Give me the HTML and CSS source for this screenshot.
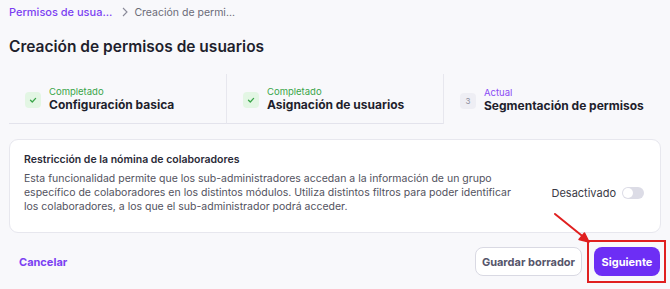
FILE: index.html
```html
<!DOCTYPE html>
<html lang="es">
<head>
    <meta charset="UTF-8">
    <title>Creación de permisos de usuarios</title>
    <link rel="stylesheet" href="styles.css">
</head>
<body>
    <div class="page">
        <!-- breadcrumb -->
        <nav class="breadcrumb">
            <a class="crumb-link">Permisos de usua...</a>
            <svg class="crumb-sep" width="10" height="10" viewBox="0 0 10 10"><path d="M3 1 L7 5 L3 9" fill="none" stroke="#8a8a99" stroke-width="1.1"/></svg>
            <span class="crumb-current">Creación de permi...</span>
        </nav>

        <h1 class="title">Creación de permisos de usuarios</h1>

        <!-- pasos -->
        <div class="stepper">
            <div class="step done">
                <div class="step-icon">
                    <svg width="10" height="10" viewBox="0 0 10 10"><path d="M2.5 5.2 L4.3 7 L7.6 3.4" fill="none" stroke="#3aa54a" stroke-width="1.3" stroke-linecap="round" stroke-linejoin="round"/></svg>
                </div>
                <div class="step-text">
                    <div class="step-status">Completado</div>
                    <div class="step-label">Configuración basica</div>
                </div>
            </div>
            <div class="step done">
                <div class="step-icon">
                    <svg width="10" height="10" viewBox="0 0 10 10"><path d="M2.5 5.2 L4.3 7 L7.6 3.4" fill="none" stroke="#3aa54a" stroke-width="1.3" stroke-linecap="round" stroke-linejoin="round"/></svg>
                </div>
                <div class="step-text">
                    <div class="step-status">Completado</div>
                    <div class="step-label">Asignación de usuarios</div>
                </div>
            </div>
            <div class="step current">
                <div class="step-icon">3</div>
                <div class="step-text">
                    <div class="step-status">Actual</div>
                    <div class="step-label">Segmentación de permisos</div>
                </div>
            </div>
        </div>

        <!-- tarjeta -->
        <div class="card">
            <h2 class="card-title">Restricción de la nómina de colaboradores</h2>
            <div class="card-body">
                <p class="card-desc">Esta funcionalidad permite que los sub-administradores accedan a la información de un grupo específico de colaboradores en los distintos módulos. Utiliza distintos filtros para poder identificar los colaboradores, a los que el sub-administrador podrá acceder.</p>
                <div class="switch-row">
                    <span class="switch-label">Desactivado</span>
                    <span class="switch"><span class="knob"></span></span>
                </div>
            </div>
        </div>

        <!-- acciones -->
        <div class="footer">
            <a class="cancel">Cancelar</a>
            <div class="actions">
                <button class="btn btn-outline">Guardar borrador</button>
                <div class="highlight">
                    <button class="btn btn-primary">Siguiente</button>
                    <svg class="arrow" width="40" height="34" viewBox="0 0 40 34"><path d="M2 2 L33 27" stroke="#e02020" stroke-width="2" stroke-linecap="round"/><path d="M36 30 L26 27.5 L31.5 21 Z" fill="#e02020" stroke="#e02020" stroke-width="1.5" stroke-linejoin="round"/></svg>
                </div>
            </div>
        </div>
    </div>
</body>
</html>
```
FILE: styles.css
```css
body {
    margin: 0;
    background-color: #f8f8fb;
    font-family: "Inter", "Noto Sans", sans-serif;
    color: #22222e;
}

.page {
    padding: 0 9px;
}

.breadcrumb {
    display: flex;
    align-items: center;
    height: 24px;
    font-size: 11px;
}

.crumb-link {
    color: #7b3ff2;
    font-weight: 500;
}

.crumb-sep {
    margin: 0 4px 0 8px;
}

.crumb-current {
    color: #6b6b78;
    font-size: 10.5px;
}

.title {
    margin: 11px 0 0;
    font-size: 15.5px;
    font-weight: 600;
    line-height: 24px;
    color: #1f1f2d;
}

/* pasos */
.stepper {
    display: flex;
    margin-top: 15px;
    height: 50px;
}

.step {
    display: flex;
    align-items: center;
    gap: 8px;
    padding-left: 16px;
    box-sizing: border-box;
    width: 217px;
}

.step.done {
    border-bottom: 1px solid #e3e3ec;
}

.step.done + .step {
    border-left: 1px solid #e7e7ee;
}

.step-icon {
    width: 16px;
    height: 16px;
    border-radius: 4px;
    background-color: #e3f6e4;
    display: flex;
    align-items: center;
    justify-content: center;
    margin-top: 3px;
}

.step.current .step-icon {
    background-color: #eeeef4;
    color: #8d8d9c;
    font-size: 8px;
}

.step-status {
    font-size: 9.5px;
    color: #3aa54a;
    line-height: 11px;
    margin-top: 2px;
}

.step.current .step-status {
    color: #8a4cf5;
}

.step-label {
    font-size: 12px;
    font-weight: 700;
    color: #1f1f2d;
    line-height: 16px;
}

/* tarjeta */
.card {
    margin-top: 15px;
    background-color: #fff;
    border: 1px solid #e7e7ee;
    border-radius: 9px;
    padding: 13px 14px 14px 14px;
    height: 94px;
    box-sizing: border-box;
}

.card-title {
    margin: 0;
    font-size: 10.5px;
    font-weight: 600;
    line-height: 14px;
    color: #2a2a38;
}

.card-body {
    display: flex;
    align-items: center;
    justify-content: space-between;
    margin-top: 5px;
}

.card-desc {
    margin: 0;
    width: 500px;
    font-size: 10.5px;
    line-height: 14px;
    color: #52525e;
}

.switch-row {
    display: flex;
    align-items: center;
    gap: 6px;
    margin-right: 2px;
}

.switch-label {
    font-size: 11px;
    color: #3a3a46;
}

.switch {
    width: 22px;
    height: 12px;
    border-radius: 6px;
    background-color: #dcdce6;
    display: flex;
    align-items: center;
    padding: 0 1px;
    box-sizing: border-box;
}

.knob {
    width: 10px;
    height: 10px;
    border-radius: 50%;
    background-color: #fff;
}

/* acciones */
.footer {
    display: flex;
    align-items: center;
    justify-content: space-between;
    margin-top: 7px;
    padding-left: 10px;
}

.cancel {
    color: #7b3ff2;
    font-weight: 700;
    font-size: 11px;
}

.actions {
    display: flex;
    align-items: center;
    gap: 5px;
}

.btn {
    height: 29px;
    border-radius: 8px;
    font-family: inherit;
    font-size: 11px;
    font-weight: 700;
    padding: 0;
    white-space: nowrap;
}

.btn-outline {
    background-color: #fff;
    border: 1px solid #d9d9e3;
    color: #55556a;
    width: 107px;
}

.btn-primary {
    display: block;
    background-color: #6d2ef5;
    border: none;
    color: #fff;
    width: 66px;
}

.highlight {
    position: relative;
    border: 2px solid #e02020;
    padding: 5px 4px 5px 5px;
    margin-right: -5px;
}

.arrow {
    position: absolute;
    left: -36px;
    top: -30px;
}
```
